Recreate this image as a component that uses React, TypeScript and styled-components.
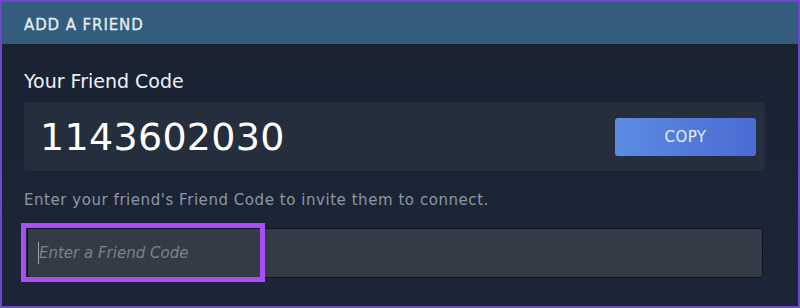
import styled, { createGlobalStyle } from "styled-components";

const GlobalStyle = createGlobalStyle`
  html, body {
    margin: 0;
    padding: 0;
    background: #1b2433;
  }
  * {
    box-sizing: border-box;
  }
`;

const FRIEND_CODE = "1143602030";

const App = () => {
  return (
    <>
      <GlobalStyle />
      <Frame>
        <Header>
          <HeaderTitle>ADD A FRIEND</HeaderTitle>
        </Header>
        <Body>
          <SectionTitle>Your Friend Code</SectionTitle>
          <CodeBox>
            <CodeValue>{FRIEND_CODE}</CodeValue>
            <CopyButton type="button">COPY</CopyButton>
          </CodeBox>
          <Hint>Enter your friend's Friend Code to invite them to connect.</Hint>
          <InputWrap>
            <CodeInput placeholder="Enter a Friend Code" />
            <Caret />
            {/* 스크린샷 위에 그려진 강조 표시 */}
            <Highlight />
          </InputWrap>
        </Body>
      </Frame>
    </>
  );
};

export default App;

const Frame = styled.div`
  width: 800px;
  height: 308px;
  border: 2px solid #6d48c9;
  display: flex;
  flex-direction: column;
  background: linear-gradient(180deg, #1a2231 0%, #1c2638 100%);
  font-family: "DejaVu Sans", "Noto Sans", sans-serif;
  overflow: hidden;
`;

const Header = styled.div`
  height: 42px;
  flex-shrink: 0;
  display: flex;
  align-items: center;
  padding: 3px 0 0 22px;
  background: #325d7c;
`;

const HeaderTitle = styled.span`
  font-size: 15px;
  letter-spacing: 0.9px;
  color: #e6ecf1;
  -webkit-text-stroke: 0.3px #e6ecf1;
`;

const Body = styled.div`
  flex: 1;
  display: flex;
  flex-direction: column;
  padding: 24px 33px 0 22px;
`;

const SectionTitle = styled.div`
  font-size: 19px;
  line-height: 26px;
  color: #eef1f4;
`;

const CodeBox = styled.div`
  margin-top: 8px;
  height: 69px;
  display: flex;
  align-items: center;
  justify-content: space-between;
  padding: 0 9px 0 16px;
  border-radius: 4px;
  background: #242e3c;
`;

const CodeValue = styled.div`
  font-size: 38px;
  letter-spacing: 0.3px;
  color: #ffffff;
  line-height: 1;
`;

const CopyButton = styled.button`
  width: 141px;
  height: 38px;
  border: none;
  border-radius: 3px;
  background: linear-gradient(90deg, #5b8ce3 0%, #4b6bd2 100%);
  color: #e9eefb;
  font-family: inherit;
  font-size: 15px;
  letter-spacing: 0.4px;
  cursor: pointer;
`;

const Hint = styled.div`
  margin-top: 19px;
  font-size: 15px;
  line-height: 20px;
  letter-spacing: 0.55px;
  color: #8c97a6;
`;

const InputWrap = styled.div`
  position: relative;
  margin-top: 18px;
  margin-left: 3px;
  margin-right: 2px;
`;

const CodeInput = styled.input`
  display: block;
  width: 100%;
  height: 50px;
  padding: 0 0 0 11px;
  border: 1px solid #10151d;
  border-radius: 3px;
  background: #343b46;
  color: #dfe3e8;
  font-family: inherit;
  font-size: 15px;
  font-style: italic;
  outline: none;

  &::placeholder {
    color: #7b818b;
  }
`;

const Caret = styled.span`
  position: absolute;
  left: 11px;
  top: 14px;
  width: 1px;
  height: 22px;
  background: #9aa0a8;
`;

const Highlight = styled.div`
  position: absolute;
  left: -6px;
  top: -5px;
  width: 244px;
  height: 59px;
  border: 5px solid #a74ff2;
  pointer-events: none;
`;
